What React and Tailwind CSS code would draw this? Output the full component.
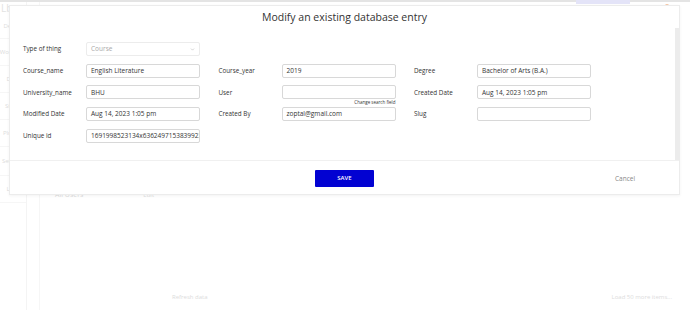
import { ChevronDown } from 'lucide-react';

const rows = [
  [
    { label: 'Type of thing', value: 'Course', select: true },
    null,
    null,
  ],
  [
    { label: 'Course_name', value: 'English Literature' },
    { label: 'Course_year', value: '2019' },
    { label: 'Degree', value: 'Bachelor of Arts (B.A.)' },
  ],
  [
    { label: 'University_name', value: 'BHU' },
    { label: 'User', value: '', hint: 'Change search field' },
    { label: 'Created Date', value: 'Aug 14, 2023 1:05 pm' },
  ],
  [
    { label: 'Modified Date', value: 'Aug 14, 2023 1:05 pm' },
    { label: 'Created By', value: 'zoptal@gmail.com' },
    { label: 'Slug', value: '' },
  ],
  [
    { label: 'Unique id', value: '1691998523134x6362497153839923' },
    null,
    null,
  ],
];

function Field({ field }) {
  if (!field) return <div className="w-[195.5px]" />;
  return (
    <div className="flex items-center w-[195.5px]">
      <span className="w-[63px] text-[6.3px] text-[#333]">{field.label}</span>
      <div className="relative">
        <div
          className={`flex items-center justify-between w-[114px] h-[14px] px-[4px] rounded-[2px] border bg-white text-[6.5px] whitespace-nowrap overflow-hidden ${
            field.select ? 'border-[#ececec] text-[#aaa]' : 'border-[#d8d8d8] text-[#333]'
          }`}
        >
          <span>{field.value}</span>
          {field.select && <ChevronDown className="w-[5px] h-[5px] text-[#bbb] shrink-0" strokeWidth={3} />}
        </div>
        {field.hint && (
          <span className="absolute right-0 top-[14px] text-[4.5px] text-[#333] whitespace-nowrap">
            {field.hint}
          </span>
        )}
      </div>
    </div>
  );
}

export default function App() {
  return (
    <div
      className="relative w-[690px] h-[310px] overflow-hidden bg-white"
      style={{ fontFamily: '"Open Sans", "Liberation Sans", sans-serif' }}
    >
      {/* Background editor page */}
      <div className="h-[2px] bg-[#e4e4e4] relative">
        <div className="absolute left-[576px] top-0 w-[54px] h-[4px] bg-[#e4e4f8]" />
        <div className="absolute left-[665px] top-[4px] w-[4px] h-[3px] rounded-full bg-[#f6c9a8]" />
      </div>
      <div className="flex h-[308px]">
        <div className="w-[27px] border-r border-[#f4f4f4] flex flex-col text-[6px] text-[#dcdcdc]">
          <div className="h-[12px] pl-[1px] text-[10px] leading-[12px] text-[#e2e2e2]">Lb</div>
          <div className="h-[25px] flex items-center justify-center border-b border-[#f6f6f6] whitespace-nowrap">Design</div>
          <div className="h-[27px] flex items-center justify-center border-b border-[#f6f6f6] whitespace-nowrap">Workflow</div>
          <div className="h-[27px] flex items-center justify-center border-b border-[#f6f6f6] whitespace-nowrap">Data</div>
          <div className="h-[27px] flex items-center justify-center border-b border-[#f6f6f6] whitespace-nowrap">Styles</div>
          <div className="h-[27px] flex items-center justify-center border-b border-[#f6f6f6] whitespace-nowrap">Plugins</div>
          <div className="h-[29px] flex items-center justify-center border-b border-[#f6f6f6] whitespace-nowrap">Settings</div>
          <div className="h-[27px] flex items-center justify-center border-b border-[#f6f6f6]">Logs</div>
        </div>
        <div className="w-[13px] border-r border-[#f6f6f6]" />
        <div className="flex-1 flex flex-col text-[6px] text-[#dcdcdc]">
          <div className="h-[188px]" />
          <div className="flex items-center h-[10px] pl-[15px] gap-[60px]">
            <span className="text-[7px]">All Users</span>
            <span>Edit</span>
          </div>
          <div className="flex-1" />
          <div className="flex items-center h-[20px] mb-[3px] pl-[132px] pr-[18px]">
            <span>Refresh data</span>
            <span className="ml-auto">Load 50 more items...</span>
          </div>
        </div>
      </div>

      {/* Modal */}
      <div className="absolute left-[9px] top-[5px] w-[671px] h-[190px] bg-white border border-[#ececec] shadow-[0_1px_3px_rgba(0,0,0,0.05)] flex flex-col">
        <div className="relative h-[154px]">
          <div className="absolute right-0 top-[22px] w-[4px] h-[132px] bg-[#ececec]" />
          <h1 className="text-center text-[10.5px] text-[#333] pt-[4px] leading-[15px]">
            Modify an existing database entry
          </h1>
          <div className="flex flex-col gap-[7.7px] pl-[13px] pt-[17px]">
            {rows.map((row, i) => (
              <div key={i} className="flex">
                {row.map((f, j) => (
                  <Field key={j} field={f} />
                ))}
              </div>
            ))}
          </div>
        </div>
        <div className="flex-1 border-t border-[#f0f0f0] flex items-center relative">
          <button className="mx-auto mt-[2px] w-[59px] h-[17px] rounded-[1px] bg-[#0202d2] text-white text-[6px] font-semibold">
            SAVE
          </button>
          <span className="absolute left-[605px] top-[13px] text-[6.5px] text-[#888]">Cancel</span>
        </div>
      </div>
    </div>
  );
}
